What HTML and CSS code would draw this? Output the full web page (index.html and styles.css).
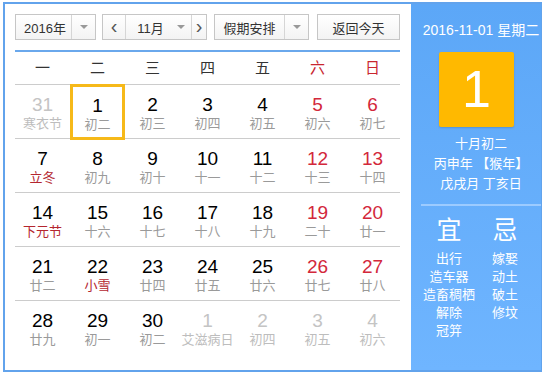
FILE: index.html
```html
<!DOCTYPE html>
<html><head><meta charset="UTF-8">
<title>万年历</title>
<link rel="stylesheet" href="styles.css">
</head>
<body>
<div class="cal">
  <div class="main">
    <div class="bar">
      <div class="sel sel-year"><span class="val">2016年</span><span class="drop"><i></i></span></div>
      <div class="grp">
        <span class="nav">&lsaquo;</span>
        <span class="val mon">11月</span><span class="drop drop-mon"><i></i></span>
        <span class="nav nav-next">&rsaquo;</span>
      </div>
      <div class="sel sel-hol"><span class="val">假期安排</span><span class="drop"><i></i></span></div>
      <div class="btn">返回今天</div>
    </div>
    <div class="week">
      <span>一</span><span>二</span><span>三</span><span>四</span><span>五</span><span class="we">六</span><span class="we">日</span>
    </div>
    <div class="days">
      <div class="d other"><b>31</b><em>寒衣节</em></div>
      <div class="d on"><b>1</b><em>初二</em></div>
      <div class="d"><b>2</b><em>初三</em></div>
      <div class="d"><b>3</b><em>初四</em></div>
      <div class="d"><b>4</b><em>初五</em></div>
      <div class="d we"><b>5</b><em>初六</em></div>
      <div class="d we"><b>6</b><em>初七</em></div>

      <div class="d"><b>7</b><em class="fest">立冬</em></div>
      <div class="d"><b>8</b><em>初九</em></div>
      <div class="d"><b>9</b><em>初十</em></div>
      <div class="d"><b>10</b><em>十一</em></div>
      <div class="d"><b>11</b><em>十二</em></div>
      <div class="d we"><b>12</b><em>十三</em></div>
      <div class="d we"><b>13</b><em>十四</em></div>

      <div class="d"><b>14</b><em class="fest">下元节</em></div>
      <div class="d"><b>15</b><em>十六</em></div>
      <div class="d"><b>16</b><em>十七</em></div>
      <div class="d"><b>17</b><em>十八</em></div>
      <div class="d"><b>18</b><em>十九</em></div>
      <div class="d we"><b>19</b><em>二十</em></div>
      <div class="d we"><b>20</b><em>廿一</em></div>

      <div class="d"><b>21</b><em>廿二</em></div>
      <div class="d"><b>22</b><em class="fest">小雪</em></div>
      <div class="d"><b>23</b><em>廿四</em></div>
      <div class="d"><b>24</b><em>廿五</em></div>
      <div class="d"><b>25</b><em>廿六</em></div>
      <div class="d we"><b>26</b><em>廿七</em></div>
      <div class="d we"><b>27</b><em>廿八</em></div>

      <div class="d"><b>28</b><em>廿九</em></div>
      <div class="d"><b>29</b><em>初一</em></div>
      <div class="d"><b>30</b><em>初二</em></div>
      <div class="d next"><b>1</b><em>艾滋病日</em></div>
      <div class="d next"><b>2</b><em>初四</em></div>
      <div class="d next"><b>3</b><em>初五</em></div>
      <div class="d next"><b>4</b><em>初六</em></div>
    </div>
  </div>

  <div class="side">
    <div class="today">2016-11-01 星期二</div>
    <div class="big">1</div>
    <div class="lunar">
      <p>十月初二</p>
      <p>丙申年 【猴年】</p>
      <p>戊戌月 丁亥日</p>
    </div>
    <div class="yiji">
      <div class="col">
        <h2>宜</h2>
        <p>出行</p><p>造车器</p><p>造畜稠栖</p><p>解除</p><p>冠笄</p>
      </div>
      <div class="col">
        <h2>忌</h2>
        <p>嫁娶</p><p>动土</p><p>破土</p><p>修坟</p>
      </div>
    </div>
  </div>
</div>
</body></html>
```

FILE: styles.css
```css
body {
  margin: 0;
  background: #fff;
  font-family: "Liberation Sans", "Noto Sans CJK SC", sans-serif;
}

.cal {
  display: flex;
  width: 539px;
  height: 370px;
  margin: 2px 0 0 3px;
  border: 2px solid #62a3ec;
  box-sizing: border-box;
}

.main {
  width: 406px;
  padding: 10px 11px 0 10px;
  box-sizing: border-box;
  background: #fff;
}

/* toolbar */
.bar {
  display: flex;
  height: 26px;
  padding-bottom: 10px;
  border-bottom: 2px solid #6aa8ec;
  font-size: 13px;
  color: #333;
}

.sel, .grp, .btn {
  display: flex;
  align-items: center;
  height: 26px;
  border: 1px solid #c6c6c6;
  box-sizing: border-box;
  background: linear-gradient(#fff, #f3f3f3);
}

.sel-year { width: 81px; margin-right: 6px; }
.grp { width: 105px; margin-right: 7px; }
.sel-hol { width: 95px; margin-right: 8px; }
.btn { width: 83px; justify-content: center; }

.val {
  flex: 1;
  text-align: center;
}

.sel-year .val { padding-left: 3px; }

.drop {
  width: 23px;
  height: 100%;
  border-left: 1px solid #d6d6d6;
  display: flex;
  align-items: center;
  justify-content: center;
}

.drop i {
  width: 0;
  height: 0;
  border-left: 4px solid transparent;
  border-right: 4px solid transparent;
  border-top: 4px solid #999;
}

.drop-mon { border-left: 0; width: 20px; }

.nav {
  width: 22px;
  height: 100%;
  text-align: center;
  line-height: 22px;
  font-size: 20px;
  color: #555;
  border-right: 1px solid #d6d6d6;
}

.nav-next {
  width: 14px;
  border-right: 0;
  border-left: 1px solid #d6d6d6;
}

.mon { padding-left: 4px; }

/* grid */
.week, .days {
  display: grid;
  grid-template-columns: repeat(7, 55px);
}

.week span {
  height: 32px;
  line-height: 32px;
  text-align: center;
  font-size: 15px;
  color: #333;
  border-bottom: 1px solid #ccc;
}

.week .we { color: #c9262f; }

.d {
  height: 54px;
  padding-top: 9px;
  box-sizing: border-box;
  text-align: center;
  border-bottom: 1px solid #ccc;
}

.d:nth-last-child(-n+7) { border-bottom: 0; }

.d b {
  display: block;
  font-weight: normal;
  font-size: 19px;
  line-height: 22px;
  color: #000;
}

.d em {
  display: block;
  font-style: normal;
  font-size: 13px;
  line-height: 16px;
  color: #9a9a9a;
}

.d.we b { color: #d3283b; }
.d em.fest { color: #b4262f; }
.d.other b, .d.next b { color: #c4c4c4; }
.d.other em, .d.next em { color: #bdbdbd; }

.d.on {
  height: 56px;
  margin: -1px 0 -1px;
  padding-top: 8px;
  border: 3px solid #f6b919;
}

/* side panel */
.side {
  flex: 1;
  padding: 16px 0 0 10px;
  background: linear-gradient(#5ca7f7, #6fb5ff);
  color: #fff;
  text-align: center;
}

.today {
  width: 120px;
  font-size: 14px;
  line-height: 20px;
}

.big {
  width: 75px;
  height: 75px;
  margin: 12px 0 0 18px;
  background: #ffb900;
  border-radius: 2px;
  box-shadow: 0 1px 2px rgba(0, 0, 0, 0.15);
  font-size: 52px;
  line-height: 75px;
}

.lunar {
  width: 120px;
  margin-top: 7px;
  padding-bottom: 10px;
  border-bottom: 2px solid #9ccbff;
}

.lunar p, .col p {
  margin: 0;
  font-size: 13px;
  line-height: 20px;
}

.yiji {
  display: grid;
  grid-template-columns: 56px 56px;
}

.col h2 {
  margin: 9px 0 5px;
  font-size: 25px;
  line-height: 30px;
  font-weight: normal;
}

.col p { line-height: 18px; }
```
